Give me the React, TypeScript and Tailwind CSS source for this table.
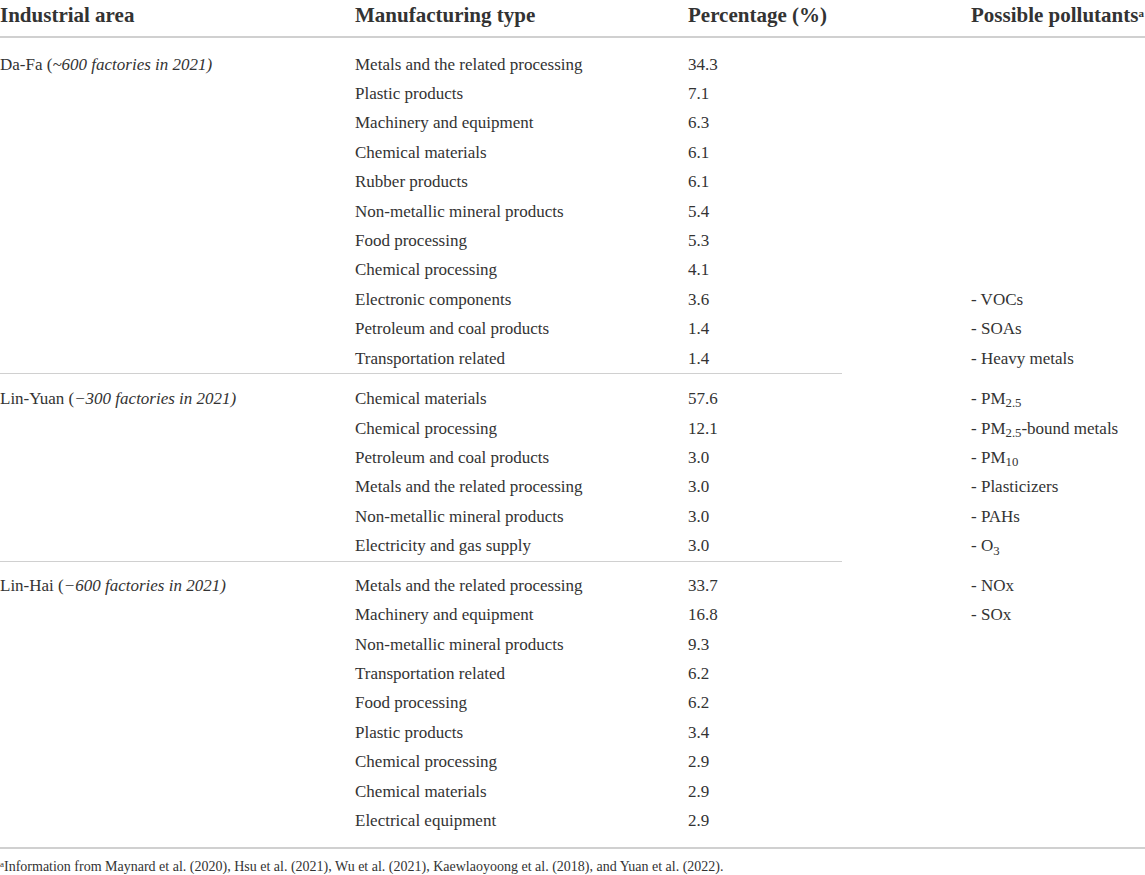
import React from "react";

type Row = { type: string; pct: string; pol?: React.ReactNode };

const groups: { name: string; note: string; firstH: string; rows: Row[] }[] = [
  {
    name: "Da-Fa",
    note: "~600 factories in 2021)",
    firstH: "h-[42px]",
    rows: [
      { type: "Metals and the related processing", pct: "34.3" },
      { type: "Plastic products", pct: "7.1" },
      { type: "Machinery and equipment", pct: "6.3" },
      { type: "Chemical materials", pct: "6.1" },
      { type: "Rubber products", pct: "6.1" },
      { type: "Non-metallic mineral products", pct: "5.4" },
      { type: "Food processing", pct: "5.3" },
      { type: "Chemical processing", pct: "4.1" },
      { type: "Electronic components", pct: "3.6", pol: "VOCs" },
      { type: "Petroleum and coal products", pct: "1.4", pol: "SOAs" },
      { type: "Transportation related", pct: "1.4", pol: "Heavy metals" },
    ],
  },
  {
    name: "Lin-Yuan",
    note: "−300 factories in 2021)",
    firstH: "h-[40px]",
    rows: [
      { type: "Chemical materials", pct: "57.6", pol: <>PM<sub>2.5</sub></> },
      { type: "Chemical processing", pct: "12.1", pol: <>PM<sub>2.5</sub>-bound metals</> },
      { type: "Petroleum and coal products", pct: "3.0", pol: <>PM<sub>10</sub></> },
      { type: "Metals and the related processing", pct: "3.0", pol: "Plasticizers" },
      { type: "Non-metallic mineral products", pct: "3.0", pol: "PAHs" },
      { type: "Electricity and gas supply", pct: "3.0", pol: <>O<sub>3</sub></> },
    ],
  },
  {
    name: "Lin-Hai",
    note: "−600 factories in 2021)",
    firstH: "h-[39px]",
    rows: [
      { type: "Metals and the related processing", pct: "33.7", pol: "NOx" },
      { type: "Machinery and equipment", pct: "16.8", pol: "SOx" },
      { type: "Non-metallic mineral products", pct: "9.3" },
      { type: "Transportation related", pct: "6.2" },
      { type: "Food processing", pct: "6.2" },
      { type: "Plastic products", pct: "3.4" },
      { type: "Chemical processing", pct: "2.9" },
      { type: "Chemical materials", pct: "2.9" },
      { type: "Electrical equipment", pct: "2.9" },
    ],
  },
];

export default function App() {
  return (
    <div className="w-[1145px] h-[875px] bg-white text-[#333] font-['Liberation_Serif',serif] overflow-hidden">
      <table className="w-full table-fixed border-collapse">
        <colgroup>
          <col className="w-[355px]" />
          <col className="w-[333px]" />
          <col className="w-[154px]" />
          <col />
        </colgroup>
        <thead>
          <tr className="h-[37px] border-b-2 border-[#d0d0d0] text-[21px] font-bold align-top">
            <th className="text-left font-bold">Industrial area</th>
            <th className="text-left font-bold">Manufacturing type</th>
            <th className="text-left font-bold whitespace-nowrap">Percentage (%)</th>
            <th className="text-left font-bold pl-[129px] whitespace-nowrap">
              Possible pollutants<sup className="text-[11px]">a</sup>
            </th>
          </tr>
        </thead>
        <tbody className="text-[17px]">
          {groups.map((g, gi) =>
            g.rows.map((r, ri) => {
              const first = ri === 0;
              const last = ri === g.rows.length - 1;
              const isEnd = gi === groups.length - 1 && last;
              const cell = [
                "leading-[29.4px] whitespace-nowrap",
                last && !isEnd ? "border-b border-[#d0d0d0]" : "",
                isEnd ? "pb-[12px]" : "",
              ].join(" ");
              return (
                <tr
                  key={`${gi}-${ri}`}
                  className={first ? `${g.firstH} align-bottom` : "h-[29.4px] align-middle"}
                >
                  <td className={cell}>
                    {first && (
                      <>
                        {g.name} (<i>{g.note}</i>
                      </>
                    )}
                  </td>
                  <td className={cell}>{r.type}</td>
                  <td className={cell}>{r.pct}</td>
                  <td className={`leading-[29.4px] whitespace-nowrap pl-[129px] ${isEnd ? "pb-[12px]" : ""}`}>
                    {r.pol && <>- {r.pol}</>}
                  </td>
                </tr>
              );
            })
          )}
        </tbody>
      </table>
      <div className="border-t-2 border-[#d0d0d0] pt-[9px] text-[14px] leading-[18px]">
        <sup className="text-[9px]">a</sup>Information from Maynard et al. (2020), Hsu et al. (2021), Wu et al. (2021),
        Kaewlaoyoong et al. (2018), and Yuan et al. (2022).
      </div>
    </div>
  );
}
